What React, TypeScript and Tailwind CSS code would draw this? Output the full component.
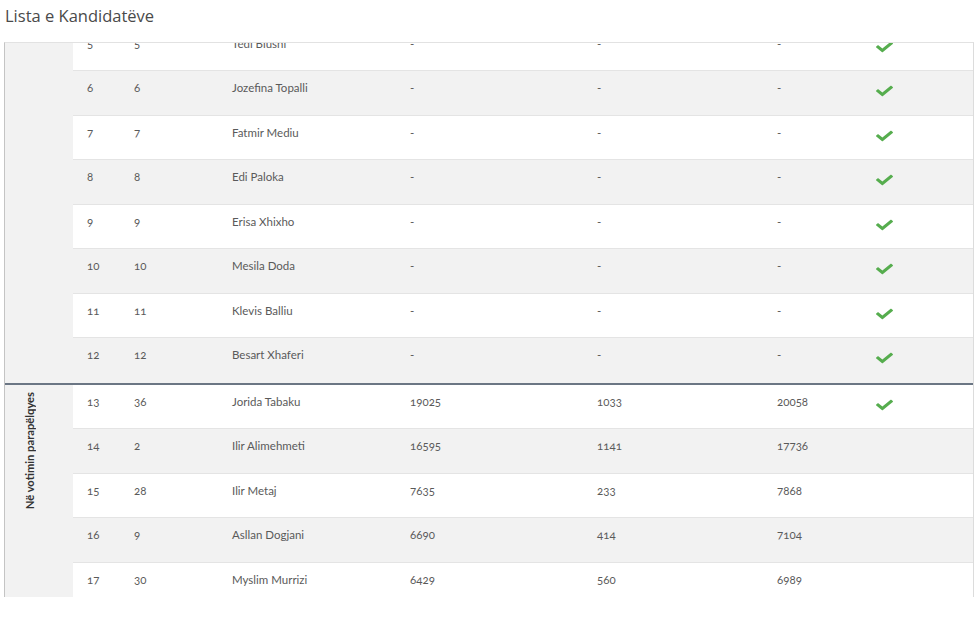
import React from "react";

type Row = {
  nr: number;
  no: number;
  name: string;
  a: string;
  b: string;
  total: string;
  elected: boolean;
};

const topRows: Row[] = [
  { nr: 5, no: 5, name: "Tedi Blushi", a: "-", b: "-", total: "-", elected: true },
  { nr: 6, no: 6, name: "Jozefina Topalli", a: "-", b: "-", total: "-", elected: true },
  { nr: 7, no: 7, name: "Fatmir Mediu", a: "-", b: "-", total: "-", elected: true },
  { nr: 8, no: 8, name: "Edi Paloka", a: "-", b: "-", total: "-", elected: true },
  { nr: 9, no: 9, name: "Erisa Xhixho", a: "-", b: "-", total: "-", elected: true },
  { nr: 10, no: 10, name: "Mesila Doda", a: "-", b: "-", total: "-", elected: true },
  { nr: 11, no: 11, name: "Klevis Balliu", a: "-", b: "-", total: "-", elected: true },
  { nr: 12, no: 12, name: "Besart Xhaferi", a: "-", b: "-", total: "-", elected: true },
];

const prefRows: Row[] = [
  { nr: 13, no: 36, name: "Jorida Tabaku", a: "19025", b: "1033", total: "20058", elected: true },
  { nr: 14, no: 2, name: "Ilir Alimehmeti", a: "16595", b: "1141", total: "17736", elected: false },
  { nr: 15, no: 28, name: "Ilir Metaj", a: "7635", b: "233", total: "7868", elected: false },
  { nr: 16, no: 9, name: "Asllan Dogjani", a: "6690", b: "414", total: "7104", elected: false },
  { nr: 17, no: 30, name: "Myslim Murrizi", a: "6429", b: "560", total: "6989", elected: false },
];

// Font Awesome style check
const Check = () => (
  <svg viewBox="0 0 512 512" className="w-[17px] h-[14px]" preserveAspectRatio="none">
    <path
      fill="#56ad4e"
      d="M173.9 439.4l-166.4-166.4c-10-10-10-26.2 0-36.2l36.2-36.2c10-10 26.2-10 36.2 0L192 312.7 432.1 72.6c10-10 26.2-10 36.2 0l36.2 36.2c10 10 10 26.2 0 36.2l-294.4 294.4c-10 10-26.2 10-36.2 0z"
    />
  </svg>
);

const TableRow = ({ row, last }: { row: Row; last?: boolean }) => (
  <div
    className={`flex h-[44.5px] text-[11.5px] leading-[13px] text-[#5a5a5a] oldstyle-nums ${
      row.nr % 2 === 0 ? "bg-[#f2f2f2]" : "bg-white"
    } ${last ? "" : "border-b border-[#e4e4e4]"}`}
  >
    <div className="w-[61px] pl-[14px] pt-[10px]">{row.nr}</div>
    <div className="w-[98px] pt-[10px]">{row.no}</div>
    <div className="w-[178px] pt-[10px]">{row.name}</div>
    <div className="w-[187px] pt-[10px]">{row.a}</div>
    <div className="w-[180px] pt-[10px]">{row.b}</div>
    <div className="w-[99px] pt-[10px]">{row.total}</div>
    <div className="flex-1 pt-[13px]">{row.elected && <Check />}</div>
  </div>
);

export default function App() {
  return (
    <div className="w-[980px] h-[625px] bg-white overflow-hidden font-['Lato','Open_Sans',sans-serif]">
      {/* Title */}
      <div className="h-[42px] pl-[5px] pt-[4px] text-[16.5px] text-[#4a4a4a] font-['Open_Sans',sans-serif]">
        Lista e Kandidatëve
      </div>

      {/* Scrolled table */}
      <div className="ml-[4px] w-[970px] h-[555px] overflow-hidden border-t border-t-[#e2e2e2] border-l border-l-[#c4c4c4] border-r border-r-[#dcdcdc]">
        <div className="-mt-[16.5px]">
          <div className="flex">
            <div className="w-[68px] bg-[#f2f2f2]" />
            <div className="flex-1">
              {topRows.map((r, i) => (
                <TableRow key={r.nr} row={r} last={i === topRows.length - 1} />
              ))}
            </div>
          </div>

          <div className="flex border-t-2 border-[#6b7684]">
            <div className="w-[68px] bg-[#f2f2f2] pl-[19px] pt-[7px]">
              <div className="[writing-mode:vertical-rl] rotate-180 text-[11.2px] font-bold text-[#333] leading-[12px]">
                Në votimin parapëlqyes
              </div>
            </div>
            <div className="flex-1">
              {prefRows.map((r) => (
                <TableRow key={r.nr} row={r} />
              ))}
            </div>
          </div>
        </div>
      </div>
    </div>
  );
}
